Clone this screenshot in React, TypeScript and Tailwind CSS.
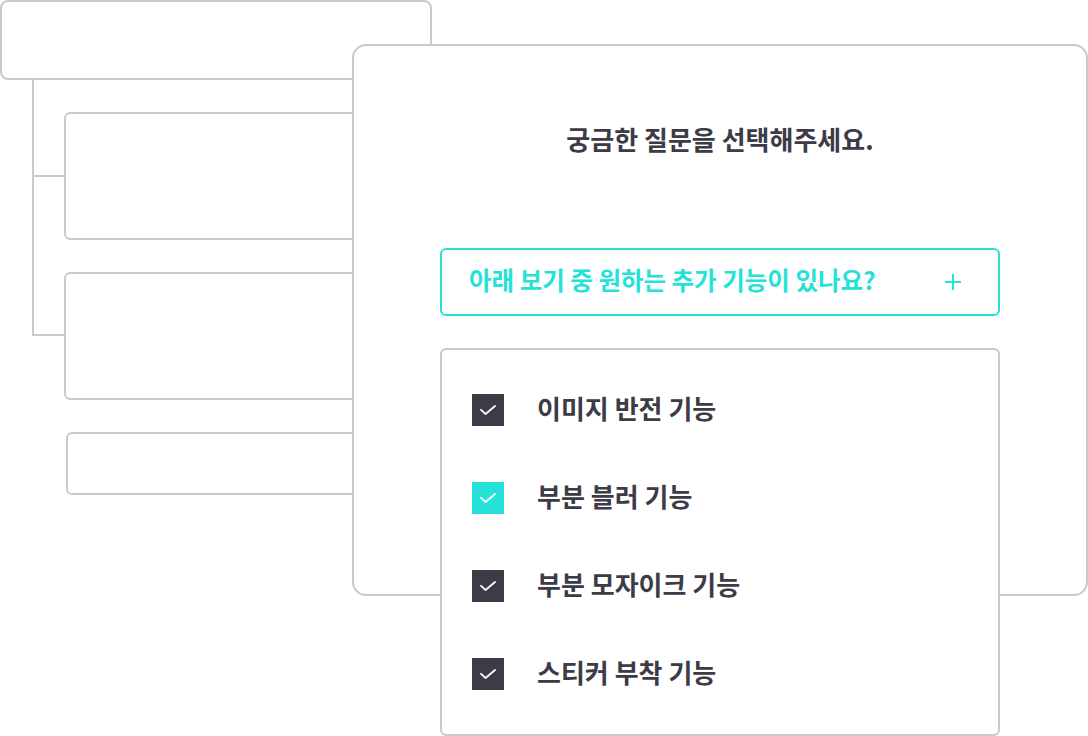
import React from 'react';

const items = [
  { label: '이미지 반전 기능', accent: false },
  { label: '부분 블러 기능', accent: true },
  { label: '부분 모자이크 기능', accent: false },
  { label: '스티커 부착 기능', accent: false },
];

const CheckMark = () => (
  <svg width="16" height="10" viewBox="0 0 16 10" fill="none">
    <path d="M1 4.8 L5.6 9 L15 1" stroke="white" strokeWidth="1.8" strokeLinecap="round" strokeLinejoin="round" />
  </svg>
);

const Box = ({ className }: { className: string }) => (
  <div className={'w-[320px] rounded-[6px] border-2 border-[#c9c9c9] bg-white ' + className} />
);

const App: React.FC = () => {
  return (
    <div
      className="relative w-[1088px] h-[736px] overflow-hidden bg-white"
      style={{ fontFamily: '"Noto Sans CJK KR", "Noto Sans", sans-serif' }}
    >
      {/* background tree illustration */}
      <div className="flex flex-col items-start">
        <div className="w-[432px] h-[80px] rounded-[8px] border-2 border-[#c9c9c9] bg-white" />
        <div className="ml-[32px] flex flex-col">
          <div className="flex flex-col border-l-2 border-[#c9c9c9] pt-[32px] pb-[32px]">
            <div className="flex items-center">
              <div className="w-[30px] h-[2px] bg-[#c9c9c9]" />
              <Box className="h-[128px]" />
            </div>
          </div>
          <div className="flex items-start">
            <div className="w-[32px] h-[64px] border-l-2 border-b-2 border-[#c9c9c9]" />
            <Box className="h-[128px]" />
          </div>
        </div>
        <Box className="ml-[66px] mt-[32px] h-[63px]" />
      </div>

      {/* front card */}
      <div className="absolute left-[352px] top-[44px] w-[736px] h-[552px] rounded-[14px] border-2 border-[#c9c9c9] bg-white">
        <div className="flex flex-col pt-[75px]">
          <h2 className="text-center text-[26px] leading-[36px] font-bold text-[#3c3b46]">
            궁금한 질문을 선택해주세요.
          </h2>

          <button className="mx-[86px] mt-[91px] h-[68px] flex items-center justify-between rounded-[6px] border-2 border-[#25e2d8] bg-white pl-[27px] pr-[36px] text-[#25e2d8]">
            <span className="pb-[3px] text-[24.5px] font-bold leading-none">아래 보기 중 원하는 추가 기능이 있나요?</span>
            <svg width="18" height="18" viewBox="0 0 18 18" fill="none">
              <path d="M9 1 V17 M1 9 H17" stroke="#25e2d8" strokeWidth="2" />
            </svg>
          </button>

          <div className="mx-[86px] mt-[32px] h-[388px] rounded-[6px] border-2 border-[#c9c9c9] bg-white pt-[16px] pl-[30px]">
            {items.map((item) => (
              <div key={item.label} className="flex h-[88px] items-center gap-[33px]">
                <div
                  className={
                    item.accent
                      ? 'flex h-[32px] w-[32px] items-center justify-center bg-[#25e2d8]'
                      : 'flex h-[32px] w-[32px] items-center justify-center bg-[#3c3b46]'
                  }
                >
                  <CheckMark />
                </div>
                <span className="pb-[5px] text-[26px] font-bold leading-none text-[#3c3b46]">{item.label}</span>
              </div>
            ))}
          </div>
        </div>
      </div>
    </div>
  );
};

export default App;
